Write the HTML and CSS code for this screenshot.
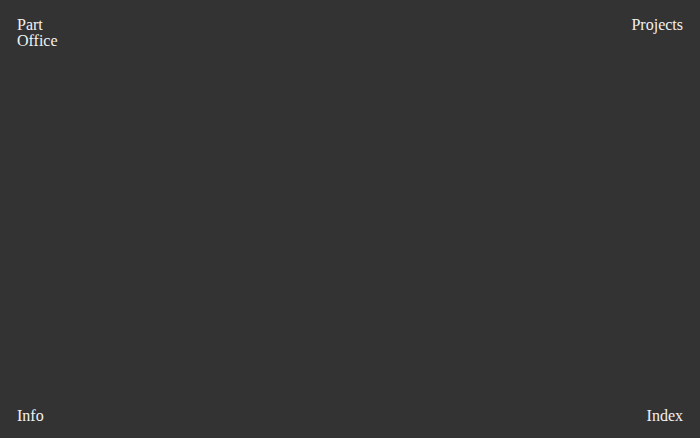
FILE: index.html
```html
<!DOCTYPE html>
<html>
<head>
    <meta charset="UTF-8">
    <title>Part Office</title>
    <link rel="stylesheet" href="styles.css">
</head>
<body>
    <div class="page">
        <div class="row">
            <a class="logo" href="#">Part<br>Office</a>
            <a class="link" href="#">Projects</a>
        </div>
        <div class="row">
            <a class="link" href="#">Info</a>
            <a class="link" href="#">Index</a>
        </div>
    </div>
</body>
</html>
```

FILE: styles.css
```css
html, body {
    margin: 0;
    height: 100%;
    background-color: #333333;
}
.page {
    box-sizing: border-box;
    height: 100%;
    padding: 17px 17px 14px 17px;
    display: flex;
    flex-direction: column;
    justify-content: space-between;
    font-family: "Liberation Serif", serif;
    font-size: 16px;
    line-height: 16px;
    color: #f2f2f2;
}
.row {
    display: flex;
    justify-content: space-between;
    align-items: flex-start;
}
.row a {
    color: #f2f2f2;
    text-decoration: none;
}
```
